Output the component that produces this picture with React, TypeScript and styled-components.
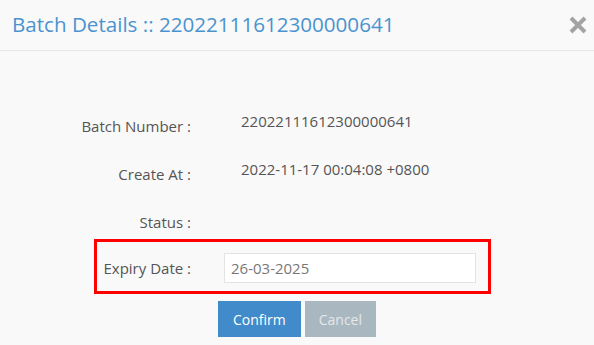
import React from "react";
import styled, { createGlobalStyle } from "styled-components";

const GlobalStyle = createGlobalStyle`
  html, body {
    margin: 0;
    padding: 0;
    background: #f9f9f9;
    font-family: "Open Sans", "Noto Sans", sans-serif;
  }
`;

const Modal = styled.div`
  width: 594px;
  height: 345px;
  background: #f9f9f9;
  overflow: hidden;
`;

const Header = styled.div`
  height: 51px;
  border-bottom: 1px solid #e6e6e6;
  display: flex;
  align-items: flex-start;
  justify-content: space-between;
  padding: 10px 6px 0 12px;
  box-sizing: border-box;
`;

const Title = styled.h4`
  margin: 0;
  font-size: 20.6px;
  line-height: 28px;
  font-weight: 400;
  color: #4b93cf;
`;

const Close = styled.button`
  border: 0;
  background: transparent;
  padding: 0;
  margin-top: 5px;
  width: 20px;
  height: 20px;
  cursor: pointer;
  svg {
    display: block;
  }
`;

const Body = styled.div`
  padding-top: 58px;
`;

const Fields = styled.div`
  display: flex;
  flex-direction: column;
  gap: 14px;
`;

const Row = styled.div`
  display: grid;
  grid-template-columns: 191px 1fr;
  column-gap: 33px;
  height: 34px;
`;

const Label = styled.label`
  text-align: right;
  font-size: 15px;
  line-height: 34px;
  color: #555;
  white-space: nowrap;
`;

const Value = styled.div`
  font-size: 15px;
  line-height: 20px;
  padding: 2px 0 0 17px;
  color: #555;
`;

const Highlight = styled.div`
  margin-left: 94px;
  width: 397px;
  height: 55px;
  box-sizing: border-box;
  border: 3px solid #ff0000;
  display: grid;
  grid-template-columns: 94px 252px;
  column-gap: 33px;
  align-items: center;
  padding-top: 3px;
`;

const DateInput = styled.input`
  height: 30px;
  box-sizing: border-box;
  border: 1px solid #e3e3e3;
  background: #fff;
  padding: 0 6px;
  font-family: inherit;
  font-size: 15px;
  color: #777;
  outline: none;
`;

const Actions = styled.div`
  display: flex;
  justify-content: center;
  gap: 4px;
  margin-top: 7px;
`;

const Button = styled.button<{ $variant: "primary" | "muted" }>`
  height: 36px;
  border: 0;
  padding: 0 ${(p) => (p.$variant === "primary" ? 15 : 14)}px;
  font-family: inherit;
  font-size: 14px;
  color: ${(p) => (p.$variant === "primary" ? "#fff" : "#e4e8eb")};
  background: ${(p) => (p.$variant === "primary" ? "#428bca" : "#a9b7c0")};
`;

const fields = [
  { label: "Batch Number :", value: "22022111612300000641" },
  { label: "Create At :", value: "2022-11-17 00:04:08 +0800" },
  { label: "Status :", value: "" },
];

export default function App() {
  return (
    <>
      <GlobalStyle />
      <Modal>
        <Header>
          <Title>Batch Details :: 22022111612300000641</Title>
          <Close aria-label="close">
            <svg width="20" height="20" viewBox="0 0 20 20">
              <path d="M3 3 L17 17 M17 3 L3 17" stroke="#a3a3a3" strokeWidth="4" strokeLinecap="butt" />
            </svg>
          </Close>
        </Header>
        <Body>
          <Fields>
            {fields.map((f) => (
              <Row key={f.label}>
                <Label>{f.label}</Label>
                <Value>{f.value}</Value>
              </Row>
            ))}
          </Fields>
          <Highlight>
            <Label>Expiry Date :</Label>
            <DateInput defaultValue="26-03-2025" />
          </Highlight>
          <Actions>
            <Button $variant="primary">Confirm</Button>
            <Button $variant="muted">Cancel</Button>
          </Actions>
        </Body>
      </Modal>
    </>
  );
}
